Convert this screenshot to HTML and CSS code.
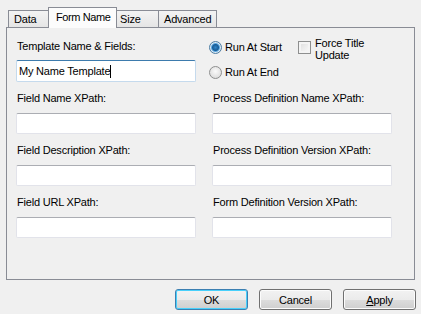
FILE: index.html
```html
<!DOCTYPE html>
<html lang="en">
<head>
    <meta charset="UTF-8">
    <title>Form Name</title>
    <link rel="stylesheet" href="styles.css">
</head>
<body>
    <div class="dialog">
        <div class="tabs">
            <div class="tab tab-data">Data</div>
            <div class="tab tab-form active">Form Name</div>
            <div class="tab tab-size">Size</div>
            <div class="tab tab-adv">Advanced</div>
        </div>
        <div class="panel">
            <div class="fields">
                <div class="field">
                    <div class="label">Template Name &amp; Fields:</div>
                    <div class="input focused">My Name Template<span class="caret"></span></div>
                </div>
                <div class="options">
                    <div class="radios">
                        <div class="radio-row"><span class="radio checked"></span>Run At Start</div>
                        <div class="radio-row"><span class="radio"></span>Run At End</div>
                    </div>
                    <div class="check-row">
                        <span class="checkbox"></span>
                        <span class="check-text">Force Title<br>Update</span>
                    </div>
                </div>
                <div class="field">
                    <div class="label">Field Name XPath:</div>
                    <div class="input"></div>
                </div>
                <div class="field">
                    <div class="label">Process Definition Name XPath:</div>
                    <div class="input"></div>
                </div>
                <div class="field">
                    <div class="label">Field Description XPath:</div>
                    <div class="input"></div>
                </div>
                <div class="field">
                    <div class="label">Process Definition Version XPath:</div>
                    <div class="input"></div>
                </div>
                <div class="field">
                    <div class="label">Field URL XPath:</div>
                    <div class="input"></div>
                </div>
                <div class="field">
                    <div class="label">Form Definition Version XPath:</div>
                    <div class="input"></div>
                </div>
            </div>
        </div>
        <div class="buttons">
            <button class="btn default">OK</button>
            <button class="btn">Cancel</button>
            <button class="btn"><u>A</u>pply</button>
        </div>
    </div>
</body>
</html>
```

FILE: styles.css
```css
body {
    margin: 0;
    background-color: #f0f0f0;
    font-family: "Liberation Sans", Arial, sans-serif;
    font-size: 11px;
    letter-spacing: -0.2px;
    color: #000;
}
.dialog {
    width: 421px;
    height: 314px;
    padding: 7px 0 0 6px;
    box-sizing: border-box;
}
.tabs {
    display: flex;
    align-items: flex-end;
    height: 20px;
    padding-left: 2px;
}
.tab {
    box-sizing: border-box;
    height: 17px;
    line-height: 16px;
    border: 1px solid #898c95;
    border-bottom: none;
    border-right: none;
    background: linear-gradient(#f3f3f3, #e5e5e5);
    padding-left: 5px;
}
.tab-data { width: 40px; }
.tab-size { width: 41px; padding-left: 3px; }
.tab-adv { width: 59px; border-right: 1px solid #898c95; }
.tab.active {
    width: 69px;
    height: 21px;
    line-height: 18px;
    margin-bottom: -1px;
    padding-left: 7px;
    letter-spacing: -0.4px;
    background: #fcfcfc;
    border-right: 1px solid #898c95;
    position: relative;
    z-index: 1;
}
.tab.active + .tab {
    border-left: none;
}
.panel {
    box-sizing: border-box;
    width: 409px;
    height: 253px;
    border: 1px solid #898c95;
    background-color: #f0f0f0;
    padding: 11px 0 0 9px;
}
.fields {
    display: grid;
    grid-template-columns: 180px 180px;
    grid-auto-rows: 52px;
    column-gap: 16px;
}
.label {
    height: 14px;
    line-height: 14px;
    padding-left: 1px;
    margin-bottom: 8px;
    white-space: nowrap;
}
.input {
    box-sizing: border-box;
    height: 21px;
    background: #fff;
    border: 1px solid #e2e3ea;
    border-top-color: #abadb3;
    border-radius: 2px;
    padding: 0 2px;
    line-height: 19px;
}
.input.focused {
    height: 22px;
    margin-top: -1px;
    border-color: #c5daed;
    border-top-color: #3d7bad;
    line-height: 20px;
}
.caret {
    display: inline-block;
    width: 1px;
    height: 13px;
    background: #000;
    vertical-align: -3px;
}
.options {
    display: flex;
    padding-top: 1px;
}
.radios {
    display: flex;
    flex-direction: column;
    gap: 11px;
    width: 86px;
}
.radio-row {
    display: flex;
    align-items: center;
    height: 14px;
    gap: 3px;
    margin-left: -3px;
}
.radio {
    box-sizing: border-box;
    width: 13px;
    height: 13px;
    border-radius: 50%;
    border: 1px solid #8e8f8f;
    background: radial-gradient(circle at 50% 40%, #fafafa, #d4d4d4);
}
.radio.checked {
    background: radial-gradient(circle, #2d85c9 0, #1a5c95 3px, #5aa9e2 4px, #dfe9f3 5px, #c9d5e0 6px);
    border-color: #4d7ea4;
}
.check-row {
    display: flex;
    gap: 4px;
}
.checkbox {
    box-sizing: border-box;
    width: 13px;
    height: 13px;
    margin-top: 1px;
    border: 1px solid #8e8f8f;
    background: linear-gradient(135deg, #dcdcdc, #fbfbfb);
    box-shadow: inset 0 0 0 2px #f4f4f4;
}
.check-text {
    line-height: 12px;
    margin-top: -3px;
}
.buttons {
    display: flex;
    justify-content: flex-end;
    gap: 11px;
    width: 410px;
    margin-top: 9px;
}
.btn {
    box-sizing: border-box;
    width: 73px;
    height: 21px;
    padding: 0;
    font-family: inherit;
    font-size: 11px;
    letter-spacing: inherit;
    color: #000;
    border: 1px solid #707070;
    border-radius: 3px;
    background: linear-gradient(#f2f2f2 0%, #ebebeb 50%, #dddddd 51%, #cfcfcf 100%);
    box-shadow: inset 0 0 0 1px #fcfcfc;
}
.btn.default {
    border-color: #3c7fb1;
    box-shadow: inset 0 0 0 1px #48d0fb;
}
```
